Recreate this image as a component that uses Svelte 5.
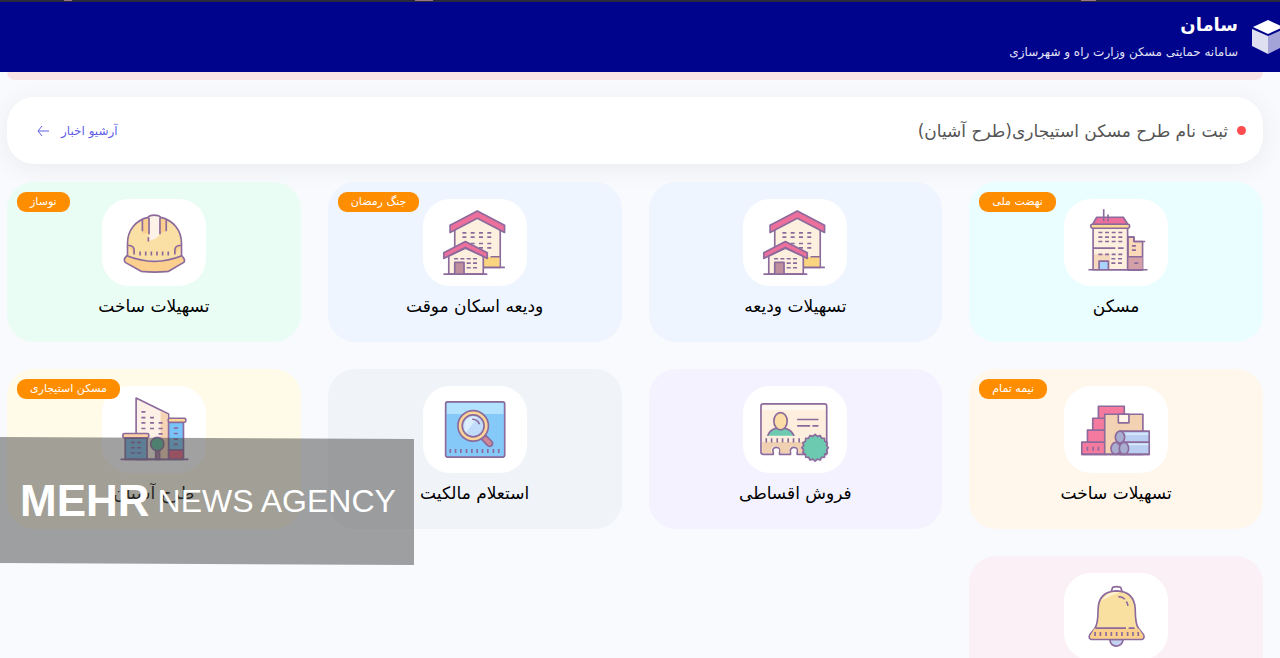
<script>
  const services = [
    { title: "مسکن", badge: "نهضت ملی", icon: "tower", tone: "cyan" },
    { title: "تسهیلات ودیعه", icon: "houses", tone: "blue" },
    { title: "ودیعه اسکان موقت", badge: "جنگ رمضان", icon: "houses", tone: "blue" },
    { title: "تسهیلات ساخت", badge: "نوساز", icon: "helmet", tone: "green" },
    { title: "تسهیلات ساخت", badge: "نیمه تمام", icon: "materials", tone: "orange" },
    { title: "فروش اقساطی", icon: "certificate", tone: "violet" },
    { title: "استعلام مالکیت", icon: "search", tone: "slate" },
    { title: "طرح آشیان", badge: "مسکن استیجاری", icon: "city", tone: "yellow" },
    { title: "", icon: "bell", tone: "pink" },
  ];

  // scalloped edge of the certificate seal
  const seal = Array.from({ length: 32 }, (_, i) => {
    const r = i % 2 ? 35 : 40;
    const a = (i * Math.PI) / 16;
    return `${(527 + r * Math.cos(a)).toFixed(1)},${(264 + r * Math.sin(a)).toFixed(1)}`;
  }).join(" ");
</script>

{#snippet tower()}
  <svg class="icon" viewBox="312 56 312 262" aria-hidden="true">
    <path fill="#f9d9b8" d="M504 171h18v13h26v86h-44z" />
    <path fill="#d3a0a8" stroke="none" d="M504 230h44v39h-44z" />
    <path fill="#fdf0de" d="M399 144h104v125H399z" />
    <path fill="#f5d9bd" stroke="none" d="M402 222h48v44h-48z" />
    <path fill="#ec6f9c" d="M410 111h80l14 22H397z" />
    <rect fill="#fbd894" x="392" y="132" width="117" height="12" rx="5" />
    <path fill="#a9d3fb" d="M417 268v-25h28v25" />
    <path d="M431 87v36M444 103v20M385 269h178M399 204h67M474 204h17M504 171h18v13h34M504 230h44" />
    <path stroke-dasharray="12 8" d="M415 157h72M415 171h72M415 184h72M415 223h72M454 236h34M454 249h34M516 197h12M516 210h12M523 249h12" />
  </svg>
{/snippet}

{#snippet houses()}
  <svg class="icon" viewBox="305 56 312 262" aria-hidden="true">
    <path fill="#fdf0de" d="M400 145l67-38 70 38v117H400z" />
    <path fill="#fbd47f" stroke="none" d="M488 230h46v32h-46z" />
    <path fill="#ec6f9c" d="M386 135l82-43 82 43v22l-82-43-82 43z" />
    <path stroke-dasharray="12 13" d="M423 158h92M423 171h92M448 190h66M473 203h41" />
    <path d="M488 262h63M508 230h28" />
    <path fill="#fdf0de" d="M382 228l50-24 54 24v54H382z" />
    <path fill="#ec6f9c" d="M367 218l65-34 66 34v17l-66-33-65 33z" />
    <path fill="#c08f9d" d="M400 281v-34h28v34" />
    <path d="M366 282h132" />
    <path stroke-dasharray="12 7" d="M398 236h70M436 249h32M436 263h32" />
  </svg>
{/snippet}

{#snippet helmet()}
  <svg class="icon" viewBox="303 56 314 262" aria-hidden="true">
    <path fill="#fae0a5" stroke="none" d="M380 231v-42c0-38 25-70 62-78 5-9 32-9 38 0 38 8 63 40 63 78v42c-51 13-112 13-163 0z" />
    <path fill="#fdf2e8" stroke="none" d="M446 110q15-10 31 0v49q-4 18-31 22z" />
    <path fill="#fbd08e" stroke="none" d="M425 120l20-9v49h-20zM478 111l20 9v32l-20 8z" />
    <path d="M380 231v-42c0-38 25-70 62-78 5-9 32-9 38 0 38 8 63 40 63 78v42M445 162v-50M478 162v-50M425 153v-35M497 153v-35M443 171v13" />
    <path fill="#fbd08e" d="M380 196h7q13 2 13 15v12M543 196h-7q-13 2-13 15v12" />
    <path fill="#fbcf8d" d="M378 227c55 22 112 22 166 0q12 13 6 20l-46 27q-43 5-83 0l-48-27q-7-10 5-20z" />
    <path d="M418 214v12M435 214v12M452 214v12M469 214v12M486 214v12M503 214v12" />
  </svg>
{/snippet}

{#snippet materials()}
  <svg class="icon" viewBox="312 78 312 262" aria-hidden="true">
    <path fill="#f47a9f" d="M415 139h78v36h-78zM398 175h40v36h-40zM382 211h56v36h-56zM365 247h70v37h-70z" />
    <path fill="#f3d2b3" d="M434 163h115v121H434z" />
    <path fill="#fff5e9" d="M475 163h32v26h-32z" />
    <path fill="#b9cef0" d="M480 214h88v33h-88zM480 247h88v37h-88z" />
    <path stroke="#d8e7fa" d="M497 223h68M505 254h60" />
    <g fill="#a9add0">
      <ellipse cx="480" cy="232" rx="14" ry="18" />
      <ellipse cx="467" cy="266" rx="14" ry="18" />
      <ellipse cx="492" cy="266" rx="14" ry="18" />
    </g>
    <path d="M365 284h204M382 261v12M399 261v12M415 261v12" />
  </svg>
{/snippet}

{#snippet certificate()}
  <svg class="icon" viewBox="311 78 311 262" aria-hidden="true">
    <path fill="#fdeedd" d="M371 132h184q7 0 7 7v145H473v-7c8-18-26-20-20 1v6h-33v-7c9-18-27-20-19 0v7h-30q-7 0-7-7V139q0-7 7-7z" />
    <path fill="#fff8f0" stroke="none" d="M368 136h190v15H368z" />
    <path fill="#efd0b0" stroke="none" d="M368 247h190v33h-82c6-28-36-28-25 0h-29c7-28-37-28-25 0h-29z" />
    <path fill="#6ccab0" d="M384 228q9-22 30-23h19q21 3 31 23" />
    <ellipse fill="#fbdda5" cx="423" cy="184" rx="20" ry="26" />
    <path d="M473 179h64M473 198h39M519 198h18M380 235v13M396 235v13M413 235v13M429 235v13M446 235v13M462 235v13M479 235v13" />
    <polygon fill="#6ccab0" points={seal} />
  </svg>
{/snippet}

{#snippet search()}
  <svg class="icon" viewBox="65 78 313 262" aria-hidden="true">
    <rect fill="#85c9f8" x="133" y="126" width="178" height="166" rx="6" />
    <path fill="#b3e2fe" stroke="none" d="M137 129h170v33H137z" />
    <path fill="#cf8795" d="M244 234l9-8 20 20q4 7-2 12-6 4-12-1l-18-19z" />
    <circle fill="#fcd597" cx="216" cy="198" r="46" />
    <circle fill="#c0dcfa" cx="216" cy="198" r="33" />
    <path fill="#dcedfe" stroke="none" d="M190 210q-5-36 25-40l14 2-34 46z" />
    <path d="M213 178q16 0 22 15M147 268v12M163 268v12M179 268v12M196 268v12M212 268v12M228 268v12M244 268v12M260 268v12M277 268v12M293 268v12" />
  </svg>
{/snippet}

{#snippet city()}
  <svg class="icon" viewBox="303 78 314 262" aria-hidden="true">
    <path fill="#fdf0e6" d="M406 114l98 48v137h-98z" />
    <path fill="#f6d3b3" stroke="none" d="M480 153l22 11v133h-22z" />
    <path fill="#78c4f8" d="M504 188h45v83h-45z" />
    <path fill="#ec5f7f" d="M504 271h45v28h-45z" />
    <rect fill="#fbd894" x="503" y="175" width="53" height="12" rx="4" />
    <path fill="#78b8e8" d="M373 235h66v64h-66z" />
    <rect fill="#fbd0a5" x="366" y="221" width="78" height="13" rx="4" />
    <path fill="#a97891" d="M465 270h12v29h-12z" />
    <circle fill="#57bd9a" cx="470" cy="253" r="20" />
    <path d="M359 299h205" />
    <path stroke-dasharray="12 14" d="M422 156h12M422 173h38M422 189h64M422 206h64M474 222h12" />
    <path stroke-dasharray="12 7" d="M390 248h31M390 264h31M390 280h31M520 205h12M520 221h12M520 238h12M520 254h12" />
  </svg>
{/snippet}

{#snippet bell()}
  <svg class="icon" viewBox="312 636 312 262" aria-hidden="true">
    <path fill="#c5d3f2" d="M449 836q3 20 20 20t21-20z" />
    <path fill="#fff" d="M454 691l4-12q12-4 24 0l4 12" />
    <path fill="#fae0a0" d="M404 803q10-12 10-57 1-54 56-56 54 2 56 56 0 45 10 57l15 19q4 12-5 14H393q-9-3-4-14z" />
    <path fill="#fbd08c" stroke="none" d="M402 804h135l13 20q1 8-5 9H394q-6-2-2-10z" />
    <path fill="#fff2d0" stroke="none" d="M424 720q12-25 43-27l13 2q-28 8-56 25z" />
    <path d="M407 802h91M506 802h18M475 707q12 0 20 8M499 722q4 5 5 13M405 814v12M421 814v12M438 814v12M454 814v12M470 814v12M486 814v12M503 814v12M519 814v12M535 814v12" />
  </svg>
{/snippet}

<div class="page" dir="rtl" lang="fa">
  <div class="browser-edge"></div>
  <header class="header">
    <svg class="header__logo" viewBox="0 0 32 36" aria-hidden="true">
      <path fill="#fff" d="M16 1l15 7-15 7L1 8z" />
      <path fill="#dfdff2" d="M0 10l16 7v18L0 27z" />
      <path fill="#a3a3d8" d="M32 10l-16 7v18l16-8z" />
    </svg>
    <div>
      <h1 class="header__title">سامان</h1>
      <p class="header__subtitle">سامانه حمایتی مسکن وزارت راه و شهرسازی</p>
    </div>
  </header>

  <main class="content">
    <div class="alert-edge"></div>

    <section class="news">
      <h2 class="news__title">ثبت نام طرح مسکن استیجاری(طرح آشیان)</h2>
      <a class="news__archive" href="#archive">
        آرشیو اخبار
        <svg viewBox="0 0 12 12" width="12" height="12" aria-hidden="true">
          <path d="M12 6H1M5 1L1 6l4 5" />
        </svg>
      </a>
    </section>

    <nav class="services">
      {#each services as service}
        <a class="card {service.tone}" href="#{service.icon}" aria-label={service.title || "اعلان"}>
          {#if service.badge}
            <span class="card__badge">{service.badge}</span>
          {/if}
          <span class="card__tile">
            {#if service.icon === "tower"}
              {@render tower()}
            {:else if service.icon === "houses"}
              {@render houses()}
            {:else if service.icon === "helmet"}
              {@render helmet()}
            {:else if service.icon === "materials"}
              {@render materials()}
            {:else if service.icon === "certificate"}
              {@render certificate()}
            {:else if service.icon === "search"}
              {@render search()}
            {:else if service.icon === "city"}
              {@render city()}
            {:else}
              {@render bell()}
            {/if}
          </span>
          <span class="card__title">{service.title}</span>
        </a>
      {/each}
    </nav>
  </main>

  <div class="watermark" dir="ltr" lang="en">
    <strong>MEHR</strong>
    <span>NEWS AGENCY</span>
  </div>
</div>

<style>
  :global(body) {
    margin: 0;
    background: #f9fafd;
  }

  .page {
    position: relative;
    height: 100vh;
    overflow: hidden;
    font-family: "DejaVu Sans", sans-serif;
    color: #111;
  }

  .browser-edge {
    height: 2px;
    background:
      linear-gradient(#a07884, #a07884) 64px 0 / 8px 1px no-repeat,
      linear-gradient(#a07884, #a07884) 415px 0 / 18px 1px no-repeat,
      linear-gradient(#a07884, #a07884) 1081px 0 / 15px 1px no-repeat,
      #292a3b;
  }

  .header {
    display: flex;
    align-items: center;
    gap: 14px;
    height: 70px;
    background: #00038c;
    color: #fff;
  }

  .header__logo {
    width: 32px;
    height: 36px;
    margin-right: -4px;
  }

  .header__title {
    margin: 0;
    font-size: 18px;
    line-height: 30px;
  }

  .header__subtitle {
    margin: 0;
    font-size: 12px;
    line-height: 24px;
    color: #e3e3f6;
  }

  .content {
    padding: 0 17px 0 7px;
  }

  .alert-edge {
    height: 8px;
    margin-bottom: 17px;
    border-radius: 0 0 8px 8px;
    background: #f8e4e6;
  }

  .news {
    display: flex;
    align-items: center;
    justify-content: space-between;
    height: 67px;
    margin-bottom: 18px;
    padding: 0 17px 0 30px;
    border-radius: 27px;
    background: #fff;
    box-shadow: 0 4px 24px rgba(60, 70, 80, 0.08);
  }

  .news__title {
    display: flex;
    align-items: center;
    gap: 9px;
    margin: 0;
    font-size: 17px;
    font-weight: 500;
    color: #555;
  }

  .news__title::before {
    content: "";
    width: 9px;
    height: 9px;
    border-radius: 50%;
    background: #ff4d4f;
  }

  .news__archive {
    display: flex;
    align-items: center;
    gap: 12px;
    font-size: 12px;
    color: #5f5fe8;
    text-decoration: none;
  }

  .news__archive path {
    fill: none;
    stroke: currentColor;
  }

  .services {
    display: grid;
    grid-template-columns: repeat(4, 1fr);
    gap: 27px;
  }

  .card {
    position: relative;
    display: flex;
    flex-direction: column;
    align-items: center;
    gap: 5px;
    min-height: 143px;
    padding-top: 17px;
    border-radius: 27px;
    color: inherit;
    text-decoration: none;
  }

  .card__badge {
    position: absolute;
    top: 10px;
    left: 10px;
    padding: 0 13px;
    border-radius: 9px;
    background: #ff8d00;
    color: #fff;
    font-size: 11px;
    line-height: 20px;
  }

  .card__tile {
    width: 104px;
    height: 87px;
    border-radius: 27px;
    background: #fff;
  }

  .card__title {
    font-size: 17px;
    line-height: 30px;
    color: #000;
  }

  .icon {
    display: block;
    width: 100%;
    height: 100%;
    fill: none;
    stroke: #8c6a9c;
    stroke-width: 5;
    stroke-linejoin: round;
  }

  .cyan {
    background: #eafeff;
  }

  .blue {
    background: #eef5ff;
  }

  .green {
    background: #eafdf4;
  }

  .orange {
    background: #fff6ec;
  }

  .violet {
    background: #f4f2ff;
  }

  .slate {
    background: #f0f4f9;
  }

  .yellow {
    background: #fffbe8;
  }

  .pink {
    background: #fcf0f7;
  }

  .watermark {
    position: absolute;
    left: 0;
    bottom: 93px;
    display: flex;
    align-items: center;
    gap: 8px;
    box-sizing: border-box;
    width: 414px;
    height: 128px;
    padding-left: 20px;
    clip-path: polygon(0 0, 100% 2px, 100% 100%, 0 126px);
    background: rgba(68, 68, 68, 0.5);
    color: #fff;
    font-family: "Liberation Sans", sans-serif;
    white-space: nowrap;
  }

  .watermark strong {
    font-size: 44px;
  }

  .watermark span {
    font-size: 32px;
  }
</style>
